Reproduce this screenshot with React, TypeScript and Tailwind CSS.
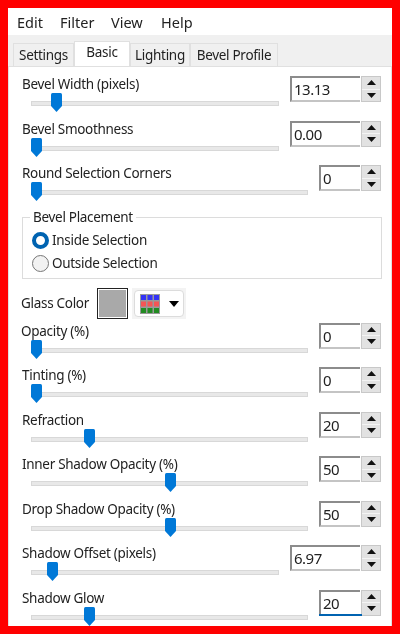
const font = "font-['Noto_Sans','Open_Sans',sans-serif]";

type SliderRowProps = {
  label: string;
  value: string;
  thumb: number;
  wide?: boolean;
  focused?: boolean;
  labelClass?: string;
};

const Spinner = ({ value, wide, focused }: { value: string; wide?: boolean; focused?: boolean }) => (
  <div className="flex h-[26px] gap-[1px]">
    <div
      className={`relative h-[26px] bg-white border-t-2 border-l-2 border-[#8c8c8c] border-b-2 border-b-[#c4c4c4] pl-[2px] text-[15px] leading-[22px] tracking-[-0.5px] text-[#222] ${
        wide ? "w-[70px]" : "w-[41px]"
      }`}
    >
      {value}
      {focused && <div className="absolute -left-[2px] -right-[2px] -bottom-[2px] h-[2px] bg-[#0063b1]" />}
    </div>
    <div className="flex w-[20px] flex-col gap-[1px] border border-[#c8c8c8] bg-[#f4f4f4]">
      <div className="flex flex-1 items-center justify-center bg-[#e2e2e2]">
        <svg width="9" height="5" viewBox="0 0 9 5"><path d="M4.5 0 9 5H0z" fill="#111" /></svg>
      </div>
      <div className="flex flex-1 items-center justify-center bg-[#e2e2e2]">
        <svg width="9" height="5" viewBox="0 0 9 5"><path d="M0 0h9L4.500 5z" fill="#111" /></svg>
      </div>
    </div>
  </div>
);

const SliderRow = ({ label, value, thumb, wide, focused, labelClass }: SliderRowProps) => (
  <div className="flex h-[44.5px] justify-between pl-[13px] pr-[10px]">
    <div className="flex-1">
      <div className={`h-[20px] whitespace-nowrap text-[13.5px] leading-[20px] tracking-[-0.3px] text-[#222] ${labelClass ?? ""}`}>{label}</div>
      <div className={`relative mt-[7px] ml-[9px] h-[5px] border border-[#d8d8d8] bg-[#e8e8e8] ${wide ? "w-[248px]" : "w-[277px]"}`}>
        <svg
          className="absolute -top-[9px]"
          style={{ left: thumb - 32 }}
          width="11"
          height="19"
          viewBox="0 0 11 19"
        >
          <path d="M0 1.500Q0 0 1.500 0h8Q11 0 11 1.500V13l-5.500 6L0 13z" fill="#0078d7" />
        </svg>
      </div>
    </div>
    <div className="pt-[2px]">
      <Spinner value={value} wide={wide} focused={focused} />
    </div>
  </div>
);

const Radio = ({ checked, label }: { checked?: boolean; label: string }) => (
  <div className="flex h-[23px] items-center gap-[3px] text-[13.5px] tracking-[-0.3px] text-[#222]">
    <div
      className={`h-[17px] w-[17px] rounded-full ${
        checked ? "border-[4px] border-[#0063b1] bg-white" : "border border-[#777] bg-[#f2f2f2]"
      }`}
    />
    {label}
  </div>
);

const App = () => {
  return (
    <div className={`h-[634px] w-[400px] overflow-hidden bg-[#ff0000] p-[8px] ${font}`}>
      <div className="flex h-full flex-col bg-white blur-[0.4px]">
        <div className="flex h-[27px] shrink-0 items-end pb-[1px] pl-[9px] text-[14.5px] leading-[24px] text-[#222]">
          <span className="w-[43px]">Edit</span>
          <span className="w-[51px]">Filter</span>
          <span className="w-[50px]">View</span>
          <span>Help</span>
        </div>

        <div className="flex h-[31px] shrink-0 items-end bg-[#f0f0f0] pl-[5px] text-[13.5px] tracking-[-0.3px] text-[#222]">
          <div className="flex h-[23px] w-[61px] items-center justify-center border border-b-0 border-[#e0e0e0] bg-[#f0f0f0]">Settings</div>
          <div className="flex h-[25px] w-[56px] items-start justify-center border border-b-0 border-[#e0e0e0] bg-white leading-[20px]">Basic</div>
          <div className="flex h-[23px] w-[60px] items-center justify-center border border-b-0 border-[#e0e0e0] bg-[#f0f0f0]">Lighting</div>
          <div className="flex h-[23px] w-[88px] items-center justify-center border border-b-0 border-[#e0e0e0] bg-[#f0f0f0]">Bevel Profile</div>
        </div>

        <div className="flex-1 overflow-hidden border border-[#e0e0e0] border-b-0 pt-[7px]">
          <SliderRow label="Bevel Width (pixels)" value="13.13" thumb={51} wide />
          <SliderRow label="Bevel Smoothness" value="0.00" thumb={31} wide />
          <SliderRow label="Round Selection Corners" value="0" thumb={31} />

          <fieldset className="ml-[13px] mr-[9px] -mt-[0.5px] h-[72px] border border-[#dcdcdc] pl-[9px]">
            <legend className="-ml-[2px] h-[20px] px-[3px] text-[13.5px] leading-[20px] tracking-[-0.3px] text-[#222]">Bevel Placement</legend>
            <div className="mt-[2px]">
              <Radio checked label="Inside Selection" />
              <Radio label="Outside Selection" />
            </div>
          </fieldset>

          <div className="ml-[12px] mb-[1.5px] mt-[9px] flex h-[31px] items-center text-[13.5px] tracking-[-0.3px] text-[#222]">
            <span className="w-[76px]">Glass Color</span>
            <div className="h-[31px] w-[31px] border border-[#222] bg-[#a9a9a9] shadow-[inset_0_0_0_1px_#fff]" />
            <div className="ml-[4px] flex h-[31px] w-[54px] items-center justify-center bg-[#f3f3f3]">
              <div className="flex h-[27px] w-[50px] items-center gap-[9px] rounded-[4px] border border-[#dcdcdc] bg-white pl-[5px]">
                <svg width="20" height="20" viewBox="0 0 20 20">
                  <rect width="20" height="20" fill="#999" />
                  <path d="M1 1h5v5H1zM7.500 1h5v5h-5zM14 1h5v5h-5z" fill="#3333f5" />
                  <path d="M1 7.500h5v5H1zM7.500 7.500h5v5h-5zM14 7.500h5v5h-5z" fill="#f55555" />
                  <path d="M1 14h5v5H1zM7.500 14h5v5h-5zM14 14h5v5h-5z" fill="#228b22" />
                </svg>
                <svg width="10" height="6" viewBox="0 0 10 6"><path d="M0 0h10L5 6z" fill="#000" /></svg>
              </div>
            </div>
          </div>

          <SliderRow label="Opacity (%)" value="0" thumb={31} labelClass="-ml-[1px]" />
          <SliderRow label="Tinting (%)" value="0" thumb={31} />
          <SliderRow label="Refraction" value="20" thumb={84} />
          <SliderRow label="Inner Shadow Opacity (%)" value="50" thumb={165} />
          <SliderRow label="Drop Shadow Opacity (%)" value="50" thumb={165} />
          <SliderRow label="Shadow Offset (pixels)" value="6.97" thumb={47} wide />
          <SliderRow label="Shadow Glow" value="20" thumb={84} focused />
        </div>
      </div>
    </div>
  );
};

export default App;
